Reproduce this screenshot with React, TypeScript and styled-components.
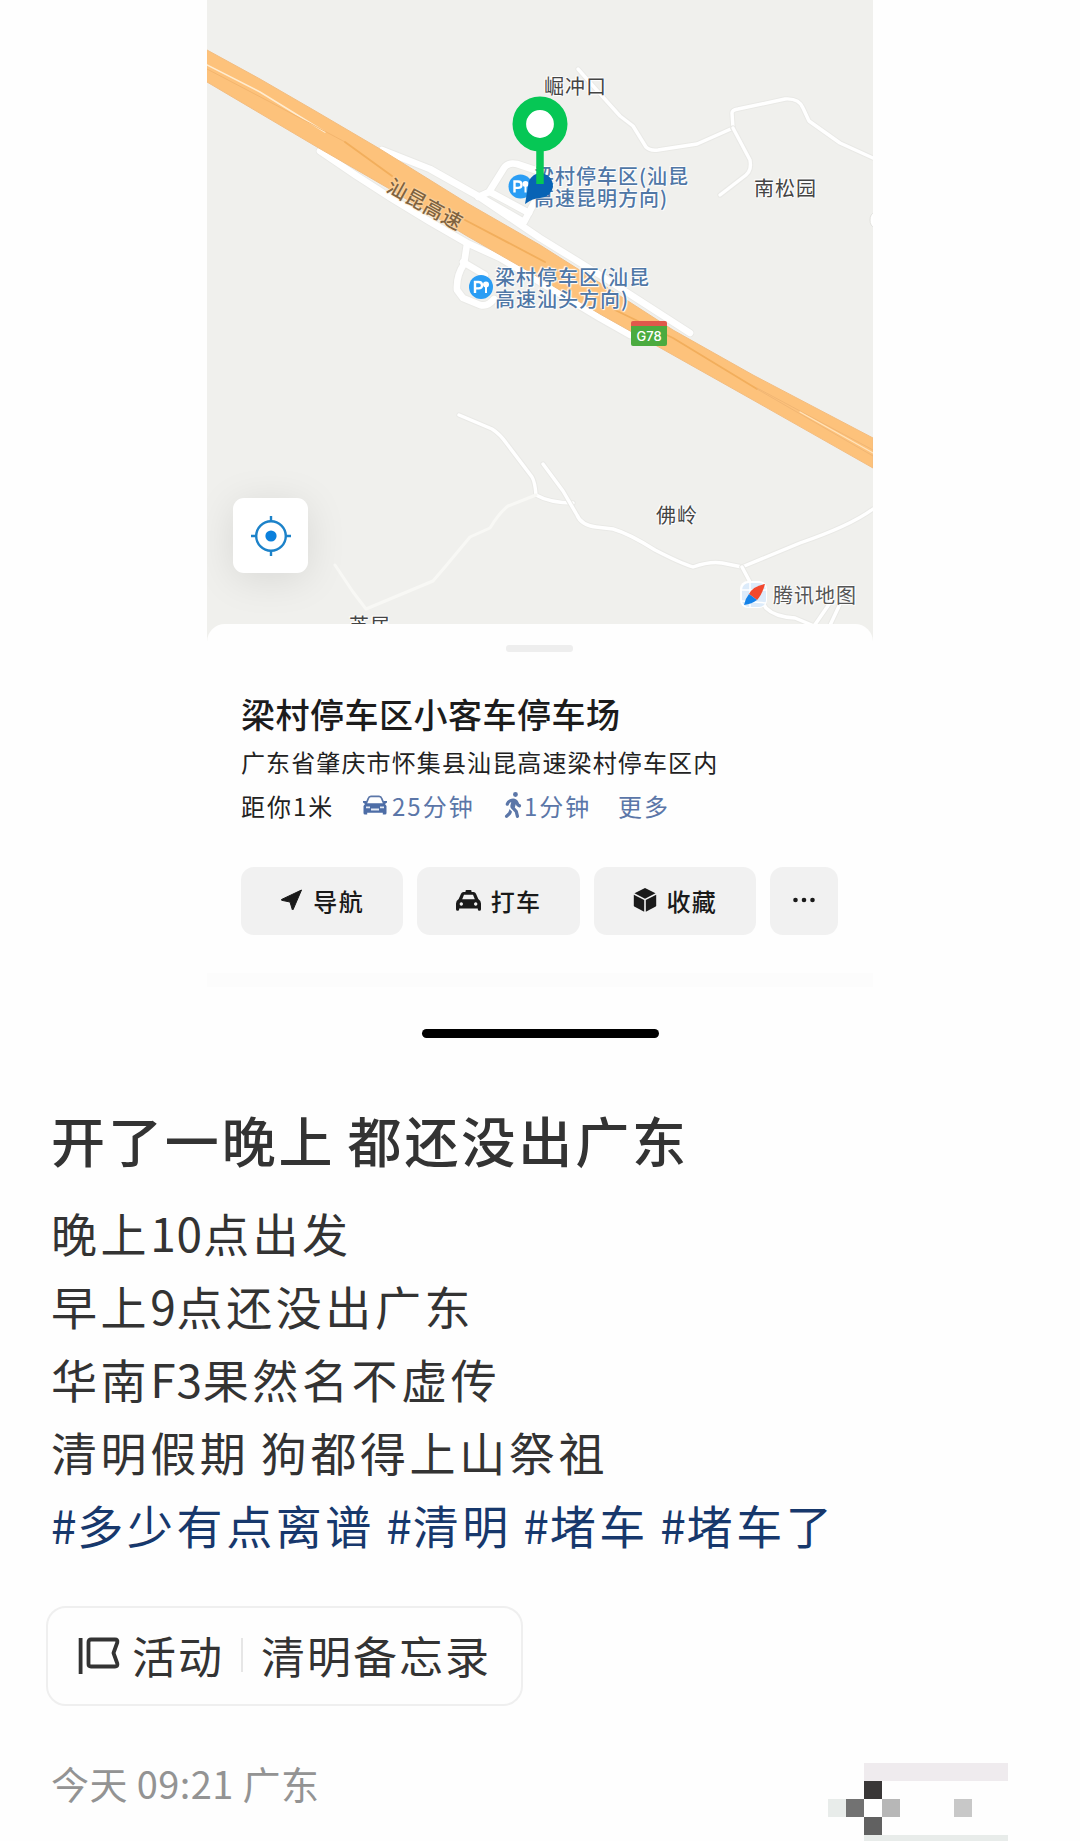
import * as React from 'react'

import styled, { createGlobalStyle } from 'styled-components'
import { FaPersonWalking } from 'react-icons/fa6'

const GlobalStyle = createGlobalStyle`
	* {
		box-sizing: border-box;
	}
	body {
		margin: 0;
		background: #fefefe;
		font-family: "Noto Sans CJK SC", "Noto Sans", sans-serif;
		color: #333;
	}
`

const Page = styled.main`
	width: 1080px;
	height: 1841px;
	overflow: hidden;
`

const Screenshot = styled.section`
	width: 666px;
	height: 1060px;
	margin: 0 auto;
`

const MapArea = styled.div`
	position: relative;
	height: 641px;
	overflow: hidden;
	background: #f0f0ed;
`

const MapCanvas = styled.svg`
	display: block;
`

const MapLabel = styled.div<{ $x: number; $y: number; $color?: string; $spacing?: number }>`
	position: absolute;
	left: ${p => p.$x}px;
	top: ${p => p.$y}px;
	font-size: 20px;
	line-height: 21.5px;
	letter-spacing: ${p => p.$spacing ?? 1}px;
	white-space: pre;
	color: ${p => p.$color || '#444'};
	text-shadow: 0 0 2px #fff, 0 0 2px #fff, 1px 1px 1px #fff, -1px -1px 1px #fff;
`

const ServiceLabel = styled(MapLabel)`
	font-weight: 500;
	color: #5077a6;
`

const RoadLabel = styled(MapLabel)`
	font-weight: 500;
	color: #80633f;
	transform: rotate(29deg);
	text-shadow: 0 0 2px #ffe3bd, 0 0 2px #ffe3bd;
`

const RoadBadge = styled.div`
	position: absolute;
	left: 424px;
	top: 321px;
	width: 36px;
	height: 25px;
	border-top: 5px solid #e0584b;
	border-radius: 2px;
	background: #4bab3f;
	color: #fff;
	font: 500 13px/20px Inter, sans-serif;
	text-align: center;
`

const Overlay = styled.svg`
	position: absolute;
	left: 0;
	top: 0;
`

const LocateButton = styled.button`
	position: absolute;
	left: 26px;
	top: 498px;
	width: 75px;
	height: 75px;
	display: flex;
	align-items: center;
	justify-content: center;
	padding: 0;
	border: 0;
	border-radius: 11px;
	background: #fff;
	box-shadow: 0 6px 40px rgba(0, 0, 0, 0.1);
`

const Sheet = styled.div`
	position: relative;
	height: 349px;
	margin-top: -17px;
	padding: 21px 35px 0 34px;
	border-radius: 18px 18px 0 0;
	background: #fefefe;
`

const Handle = styled.div`
	width: 67px;
	height: 7px;
	margin: 0 auto;
	border-radius: 3px;
	background: #eee;
`

const PlaceName = styled.h2`
	margin: 37px 0 0;
	font-size: 34px;
	font-weight: 500;
	line-height: 50px;
	letter-spacing: 0.5px;
	color: #1c1c1c;
`

const Address = styled.div`
	margin-top: 5px;
	font-size: 24px;
	line-height: 36px;
	letter-spacing: 1.12px;
	color: #222;
`

const Travel = styled.div`
	display: flex;
	align-items: center;
	height: 36px;
	margin-top: 7px;
	font-size: 24px;
	letter-spacing: 2px;
	color: #5b76a8;
`

const Distance = styled.span`
	width: 121px;
	color: #222;
`

const Mode = styled.span<{ $width: number }>`
	display: flex;
	align-items: center;
	gap: 4px;
	width: ${p => p.$width}px;
`

const Walker = styled(FaPersonWalking)`
	margin: 0 -6px 0 -3px;
`

const Actions = styled.div`
	display: flex;
	gap: 14px;
	margin-top: 44px;
`

const Action = styled.button<{ $compact?: boolean }>`
	display: flex;
	align-items: center;
	justify-content: center;
	gap: 10px;
	flex: ${p => (p.$compact ? '0 0 68px' : '1 1 0')};
	height: 68px;
	padding: 0 0 2px;
	border: 0;
	border-radius: 13px;
	background: #f1f1f1;
	color: #1a1a1a;
	font-family: inherit;
	font-size: 24px;
	font-weight: 500;
	letter-spacing: 1.3px;
`

const Band = styled.div`
	height: 14px;
	background: #fcfcfc;
`

const HomeBar = styled.div`
	width: 237px;
	height: 9px;
	margin: 42px auto 0;
	border-radius: 5px;
	background: #000;
`

const Post = styled.article`
	padding: 39px 51px 0;
`

const Title = styled.h1`
	margin: 0;
	font-size: 54px;
	font-weight: 500;
	line-height: 82px;
	letter-spacing: 2.9px;
	word-spacing: -3px;
`

const Body = styled.div`
	margin-top: 15px;
	font-size: 46px;
	line-height: 73px;
	letter-spacing: 3.6px;
	word-spacing: -2.5px;
`

const Latin = styled.span`
	letter-spacing: 0.8px;
`

const Tags = styled.div`
	color: #17386c;
`

const Activity = styled.div`
	display: flex;
	align-items: center;
	width: 477px;
	height: 100px;
	margin: 45px 0 0 -5px;
	padding: 0 0 2px 30px;
	border: 2px solid #efefef;
	border-radius: 20px;
	font-size: 44px;
	letter-spacing: 2px;
`

const ActivityKind = styled.span`
	margin-left: 12px;
`

const Divider = styled.span`
	width: 2px;
	height: 34px;
	margin: 0 18px 0 17px;
	background: #e6e6e6;
`

const Meta = styled.footer`
	display: flex;
	justify-content: space-between;
	margin-top: 50px;
	font-size: 38px;
	line-height: 54px;
	letter-spacing: 0.4px;
	color: #939393;
`

const Mosaic = styled.div`
	display: grid;
	grid-template-columns: repeat(10, 18px);
	grid-auto-rows: 18px;
	margin-top: 7px;
	margin-right: 21px;
`

const Cell = styled.i<{ $col: number; $row: number; $span?: number; $color: string }>`
	grid-column: ${p => p.$col} / span ${p => p.$span || 1};
	grid-row: ${p => p.$row};
	background: ${p => p.$color};
`

const minorRoads = [
  'M578 69 L602 96 L620 116 L633 126 L646 147 Q650 151 658 150 L697 144 L733 128',
  'M733 128 L732 113 Q732 110 738 109 L785 99 Q799 98 803 108 L809 121 L840 143 L873 158',
  'M733 128 L750 160 Q752 170 746 175 L720 195',
  'M459 415 L492 429 Q500 434 507 444 L532 477 Q535 482 536 495 Q550 503 573 503',
  'M543 464 L563 491 L577 515 Q581 525 596 527 L613 529 Q630 534 655 550 Q680 563 693 567 Q710 561 722 563 L742 567 L800 543 Q850 526 873 509',
  'M742 567 L750 582 L766 608 Q775 617 795 618 L814 626 L832 600',
  'M825 636 L840 604',
]

const faintRoads = ['M536 495 L508 506 Q499 513 490 528 L470 537 L445 567 L433 581 L366 609 L353 592 L335 565']

const serviceRoads = [
  'M320 151 Q390 200 467 243 L500 258 L600 318 L630 335',
  'M382 150 L430 169 L478 196 L540 238 L600 275 L690 333',
  'M478 197 L489 192 L504 168 Q508 162 517 164 L535 170',
  'M484 199 L524 222 L534 203',
  'M490 192 L529 213',
  'M467 244 L464 264 Q456 276 457 290 L463 298 L480 305 Q488 307 494 299',
  'M463 262 L485 275',
]

const highwayPath =
  'M207 50 L260 79 L317 112 L380 149 L467 203 L540 245 L600 283 L673 330 L753 375 L873 438 V468 L753 400 L657 346 L600 314 L523 268 L467 236 L388 188 L317 147 L207 82 Z'

const Roads = () => (
  <MapCanvas width="666" height="641" viewBox="207 0 666 641" fill="none" strokeLinejoin="round" strokeLinecap="round">
    {minorRoads.map(d => (
      <g key={d}>
        <path d={d} stroke="#e9e9e6" strokeWidth="5.4" />
        <path d={d} stroke="#fff" strokeWidth="3.4" />
      </g>
    ))}
    {faintRoads.map(d => (
      <path key={d} d={d} stroke="#f8f8f5" strokeWidth="3" />
    ))}
    <ellipse cx="874" cy="220" rx="4" ry="7" fill="#fff" stroke="#e2e2de" />
    {serviceRoads.map(d => (
      <path key={d} d={d} stroke="#e9e9e6" strokeWidth="8.5" />
    ))}
    {serviceRoads.map(d => (
      <path key={d} d={d} stroke="#fff" strokeWidth="6.6" />
    ))}
    <path d={highwayPath} fill="#fdc27b" stroke="#f3bd80" />
    <path d="M207 65 L260 92 L325 132" stroke="#ffecd0" strokeWidth="1.5" />
    <path d="M207 69 L270 102 L345 142" stroke="#f2b36c" strokeWidth="0.9" />
    <path d="M345 142 L392 176 M465 220 L545 262 M615 310 L673 338 L757 389" stroke="#f2ae5c" strokeWidth="1.8" />
    <path d="M757 388 L873 450 M757 389 L873 456" stroke="#efb473" strokeWidth="0.9" />
    <path d="M800 412 L873 453" stroke="#ffe3bb" strokeWidth="1.2" />
  </MapCanvas>
)

const Parking = ({ x, y }: { x: number; y: number }) => (
  <g transform={`translate(${x} ${y})`}>
    <circle r="12" fill="#2a9df4" />
    <path d="M-6 6 V-5 H-2.5 Q1 -5 1 -1.8 Q1 1.4 -2.5 1.4 H-6" fill="none" stroke="#fff" strokeWidth="2.4" />
    <path d="M5 6 V0" stroke="#fff" strokeWidth="2" />
    <circle cx="5" cy="-2.4" r="3" fill="#fff" />
  </g>
)

const Markers = () => (
  <Overlay width="666" height="641" viewBox="207 0 666 641">
    <Parking x={520.5} y={186.5} />
    <Parking x={481} y={287} />
    <path d="M525 204 L529 181 Q533 173 541 173 Q553 175 553 187 Q551 197 540 198 Q533 198 525 204 Z" fill="#0863b5" />
    <path d="M540 124 V184" stroke="#06c755" strokeWidth="7.5" />
    <circle cx="540" cy="124" r="20.7" fill="#fff" stroke="#06c755" strokeWidth="13.6" />
  </Overlay>
)

const MapLogo = () => (
  <Overlay width="666" height="641" viewBox="207 0 666 641">
    <rect x="740" y="581" width="27" height="27" rx="8" fill="#fff" />
    <rect x="742" y="583" width="24" height="24" rx="7" fill="#dcebfa" />
    <path d="M742 590 H766 M750 583 V607 M742 601 L766 603" stroke="#fff" strokeWidth="1.5" />
    <path d="M765 584 Q753 586 749 594 L757 600 Q762 595 765 584 Z" fill="#f2482d" />
    <path d="M744 605 Q745 599 749 594 L757 600 Q752 604 744 605 Z" fill="#1482e8" />
  </Overlay>
)

const LocateIcon = () => (
  <svg width="42" height="42" viewBox="0 0 42 42" fill="none" stroke="#1c82c9" strokeWidth="2.4">
    <circle cx="21" cy="21" r="14.8" />
    <path d="M21 1 V6.5 M21 35.5 V41 M1 21 H6.5 M35.5 21 H41" />
    <circle cx="21" cy="21" r="5.6" fill="#0b80dc" stroke="none" />
  </svg>
)

const CarIcon = () => (
  <svg width="26" height="20" viewBox="0 0 26 20">
    <path d="M4 9 L6.5 3 Q7 1.5 9 1.3 H17 Q19 1.5 19.5 3 L22 9" fill="none" stroke="#5b76a8" strokeWidth="1.8" />
    <path d="M1 6 H4.5 V8.2 H21.5 V6 H25 V7.5 L23 9 L24.5 11 V18 Q24.5 19.5 23 19.5 H20.8 V17.8 H5.2 V19.5 H3 Q1.5 19.5 1.5 18 V11 L3 9 L1 7.5 Z" fill="#4d6da6" />
    <path d="M4 12.3 H8 M18 12.3 H22 M9 14.5 H17" stroke="#e3e9f3" strokeWidth="1.8" />
  </svg>
)

const ArrowIcon = () => (
  <svg width="23" height="22" viewBox="0 0 23 22">
    <path d="M21.5 1 L1.5 10.5 Q1 11 1.7 11.3 L10 13 L12.3 20.6 Q12.7 21.4 13.1 20.6 Z" fill="currentColor" stroke="currentColor" strokeLinejoin="round" />
  </svg>
)

const TaxiIcon = () => (
  <svg width="25" height="21" viewBox="0 0 25 21" fill="currentColor">
    <rect x="9.500" y="0" width="6" height="4" rx="1" />
    <path
      fillRule="evenodd"
      d="M7.500 2 H17.500 Q19.300 2 20 3.700 L22.300 9 Q25 10.500 25 13.500 V19.300 Q25 20.800 23.400 20.800 Q21.800 20.800 21.800 19.300 V18.500 H3.200 V19.300 Q3.200 20.800 1.600 20.800 Q0 20.800 0 19.300 V13.500 Q0 10.500 2.700 9 L5 3.700 Q5.700 2 7.500 2 Z M8 4.800 L6.200 9.200 H18.800 L17 4.800 Z M5.300 12.300 A1.700 1.700 0 1 0 5.310 12.300 Z M19.700 12.300 A1.700 1.700 0 1 0 19.710 12.300 Z"
    />
  </svg>
)

const BoxIcon = () => (
  <svg width="24" height="26" viewBox="0 0 24 26" fill="currentColor">
    <path d="M12 1 L22.5 6.3 L12 11.7 L1.5 6.3 Z" />
    <path d="M.8 7.8 L11.2 13.1 V24.8 L1.7 19.8 Q.8 19.3 .8 18.3 Z" />
    <path d="M23.2 7.8 L12.8 13.1 V24.8 L22.3 19.8 Q23.2 19.3 23.2 18.3 Z" />
  </svg>
)

const DotsIcon = () => (
  <svg width="24" height="6" viewBox="0 0 24 6" fill="currentColor">
    <circle cx="3.500" cy="3" r="2.300" />
    <circle cx="12" cy="3" r="2.300" />
    <circle cx="20.500" cy="3" r="2.300" />
  </svg>
)

// flag on a pole, with a notched right edge
const FlagIcon = () => (
  <svg width="42" height="38" viewBox="0 0 42 38" fill="none" stroke="#333" strokeWidth="3.8">
    <path d="M2.6 2 V38" />
    <path d="M13 3.500 H37 Q40 3.500 39.3 6.500 L35.5 17 L39.3 27.500 Q40 30.500 37 30.500 H13 Q10.5 30.500 10.5 28 V6 Q10.5 3.500 13 3.500 Z" strokeLinejoin="round" />
  </svg>
)

const App: React.FC = () => {
  return (
    <Page>
      <GlobalStyle />
      <Screenshot>
        <MapArea>
          <Roads />
          <MapLabel $x={337} $y={75}>崛冲口</MapLabel>
          <MapLabel $x={547} $y={177}>南松园</MapLabel>
          <MapLabel $x={449} $y={504}>佛岭</MapLabel>
          <MapLabel $x={142} $y={614}>芝居</MapLabel>
          <ServiceLabel $x={327} $y={165}>{'梁村停车区(汕昆\n高速昆明方向)'}</ServiceLabel>
          <ServiceLabel $x={288} $y={266}>{'梁村停车区(汕昆\n高速汕头方向)'}</ServiceLabel>
          <RoadLabel $x={177} $y={193} $spacing={0.8}>汕昆高速</RoadLabel>
          <RoadBadge>G78</RoadBadge>
          <Markers />
          <MapLogo />
          <MapLabel $x={566} $y={584} $color="#555">腾讯地图</MapLabel>
          <LocateButton aria-label="定位">
            <LocateIcon />
          </LocateButton>
        </MapArea>
        <Sheet>
          <Handle />
          <PlaceName>梁村停车区小客车停车场</PlaceName>
          <Address>广东省肇庆市怀集县汕昆高速梁村停车区内</Address>
          <Travel>
            <Distance>距你1米</Distance>
            <Mode $width={141}>
              <CarIcon />
              25分钟
            </Mode>
            <Mode $width={115}>
              <Walker size={26} />
              1分钟
            </Mode>
            <span>更多</span>
          </Travel>
          <Actions>
            <Action>
              <ArrowIcon />
              导航
            </Action>
            <Action>
              <TaxiIcon />
              打车
            </Action>
            <Action>
              <BoxIcon />
              收藏
            </Action>
            <Action $compact aria-label="更多操作">
              <DotsIcon />
            </Action>
          </Actions>
        </Sheet>
        <Band />
        <HomeBar />
      </Screenshot>
      <Post>
        <Title>开了一晚上 都还没出广东</Title>
        <Body>
          <div>晚上<Latin>10</Latin>点出发</div>
          <div>早上<Latin>9</Latin>点还没出广东</div>
          <div>华南<Latin>F3</Latin>果然名不虚传</div>
          <div>清明假期 狗都得上山祭祖</div>
          <Tags>
            <Latin>#</Latin>多少有点离谱 <Latin>#</Latin>清明 <Latin>#</Latin>堵车 <Latin>#</Latin>堵车了
          </Tags>
        </Body>
        <Activity>
          <FlagIcon />
          <ActivityKind>活动</ActivityKind>
          <Divider />
          清明备忘录
        </Activity>
        <Meta>
          <span>今天 09:21 广东</span>
          <Mosaic>
            <Cell $col={3} $row={1} $span={8} $color="#efebee" />
            <Cell $col={3} $row={2} $color="#393737" />
            <Cell $col={1} $row={3} $color="#e8ecea" />
            <Cell $col={2} $row={3} $color="#727272" />
            <Cell $col={3} $row={3} $color="#fff" />
            <Cell $col={4} $row={3} $color="#b7b7b7" />
            <Cell $col={8} $row={3} $color="#c8c8c8" />
            <Cell $col={3} $row={4} $color="#616161" />
            <Cell $col={3} $row={5} $span={8} $color="#e8ecea" />
          </Mosaic>
        </Meta>
      </Post>
    </Page>
  )
}

export default App
